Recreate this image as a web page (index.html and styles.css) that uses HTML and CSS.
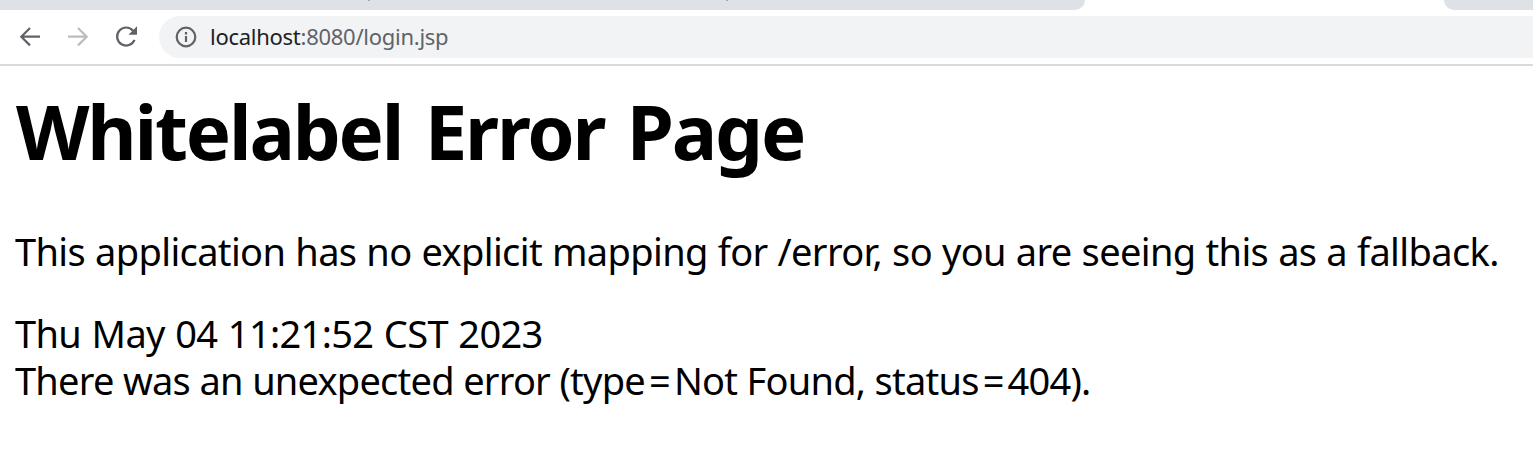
FILE: index.html
```html
<!DOCTYPE html>
<html lang="en">
<head>
<meta charset="utf-8">
<title>Whitelabel Error Page</title>
<link rel="stylesheet" href="styles.css">
</head>
<body>
<header class="browser">
  <div class="tabs">
    <div class="tabs-before"><i class="descender"></i><i class="descender"></i></div>
    <div class="tabs-after"></div>
  </div>
  <div class="toolbar">
    <svg class="icon" viewBox="0 0 24 24"><path d="M22 11.700H3.500M12 3L3.300 11.700l8.700 8.700"/></svg>
    <svg class="icon icon-disabled" viewBox="0 0 24 24"><path d="M2 11.700h18.500M12 3l8.700 8.700-8.700 8.700"/></svg>
    <svg class="icon" viewBox="0 0 24 24"><path d="M19 5.700A9 9 0 1 0 20.500 14.800"/><path class="solid" d="M23 1.300v8.500h-8.500z"/></svg>
    <div class="address">
      <svg class="icon icon-info" viewBox="0 0 24 24"><circle cx="12" cy="12" r="9.300"/><path d="M12 11v6M12 7v2.400"/></svg>
      <span class="url"><span class="host">localhost</span>:8080/login.jsp</span>
    </div>
  </div>
</header>
<main class="page">
  <h1 class="title">Whitelabel Error Page</h1>
  <p class="message">This application has no explicit mapping for /error, so you are seeing this as a fallback.</p>
  <div class="detail date">Thu May 04 11:21:52 CST 2023</div>
  <div class="detail cause">There was an unexpected error (type<span class="equals">=</span>Not Found, status<span class="equals">=</span>404).</div>
</main>
</body>
</html>
```
FILE: styles.css
```css
body {
  margin: 0;
  background: #fff;
  color: #000;
  font-family: "Noto Sans", "Open Sans", sans-serif;
  overflow: hidden;
}
.browser {
  height: 64px;
  border-bottom: 2px solid #dadada;
}
.tabs {
  display: flex;
  justify-content: space-between;
  height: 10px;
}
.tabs-before {
  display: flex;
  gap: 356px;
  box-sizing: border-box;
  width: 1085px;
  padding-left: 368px;
  background: #dee1e6;
  border-bottom-right-radius: 10px;
}
/* Tips of the tab titles' descenders, at the window's top edge */
.descender {
  width: 2px;
  height: 1px;
  background: #a3a6aa;
}
.tabs-after {
  width: 89px;
  background: #dee1e6;
  border-bottom-left-radius: 10px;
}
.toolbar {
  display: flex;
  align-items: center;
  gap: 24px;
  height: 54px;
  padding-left: 18px;
}
.icon {
  flex: none;
  width: 24px;
  height: 24px;
  fill: none;
  stroke: #5f6368;
  stroke-width: 2.200;
}
.icon-disabled {
  stroke: #babcbe;
}
.icon .solid {
  fill: #5f6368;
  stroke: none;
}
.address {
  display: flex;
  flex: 1;
  align-items: center;
  gap: 12px;
  height: 42px;
  margin-left: -3px;
  padding-left: 15px;
  border-radius: 21px 0 0 21px;
  background: #f1f3f4;
}
.url {
  color: #5f6368;
  font-size: 22px;
  letter-spacing: -0.27px;
  line-height: 41px;
  height: 42px;
  white-space: nowrap;
}
.host {
  color: #202124;
}
.page {
  padding: 13px 15px 0;
  white-space: nowrap;
}
.title {
  margin: 0 0 0 1px;
  font-size: 76px;
  letter-spacing: -2.2px;
  word-spacing: 5px;
  line-height: 104px;
}
.message {
  margin: 44px 0 35px;
  font-size: 38px;
  letter-spacing: -0.63px;
  word-spacing: 0.7px;
  line-height: 48px;
}
.detail {
  font-size: 38px;
  line-height: 47px;
}
.date {
  letter-spacing: -0.65px;
  word-spacing: 1.2px;
}
.cause {
  letter-spacing: -0.77px;
  word-spacing: 0.3px;
}
.equals {
  padding: 0 4px;
}
```
